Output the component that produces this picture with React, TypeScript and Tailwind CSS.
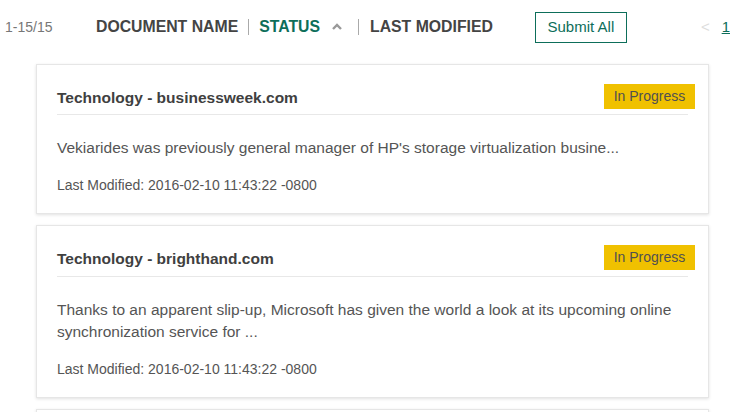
import React from 'react';

type Doc = {
  title: string;
  status: string;
  summary: string;
  modified: string;
};

const docs: Doc[] = [
  {
    title: 'Technology - businessweek.com',
    status: 'In Progress',
    summary: "Vekiarides was previously general manager of HP's storage virtualization busine...",
    modified: '2016-02-10 11:43:22 -0800',
  },
  {
    title: 'Technology - brighthand.com',
    status: 'In Progress',
    summary:
      'Thanks to an apparent slip-up, Microsoft has given the world a look at its upcoming online synchronization service for ...',
    modified: '2016-02-10 11:43:22 -0800',
  },
  {
    title: 'Technology - cnet.com',
    status: 'In Progress',
    summary: 'Loading...',
    modified: '2016-02-10 11:43:22 -0800',
  },
];

const DocCard: React.FC<{ doc: Doc }> = ({ doc }) => (
  <div className="border border-[#e6e6e6] bg-white px-5 pt-[18px] pb-[18px] shadow-[0_1px_3px_rgba(0,0,0,0.12)]">
    {/* Card header */}
    <div className="flex items-center justify-between border-b border-[#e8e8e8] pb-[5px]">
      <h3 className="pt-[3px] text-[15.5px] font-bold text-[#404040]">{doc.title}</h3>
      <span className="-mr-[7px] flex h-[25px] w-[91px] items-center justify-center bg-[#f0c100] text-[14px] text-[#505050]">
        {doc.status}
      </span>
    </div>
    <p className="mt-[22px] text-[15.5px] leading-[22px] text-[#555]">{doc.summary}</p>
    <p className="mt-4 text-[14px] leading-5 text-[#555]">Last Modified: {doc.modified}</p>
  </div>
);

export default function App() {
  return (
    <div className="min-h-screen overflow-hidden bg-white font-['Liberation_Sans',Arial,sans-serif]">
      {/* Toolbar */}
      <div className="flex h-[54px] items-center whitespace-nowrap">
        <span className="w-[96px] pl-[5px] text-[14px] text-[#777]">1-15/15</span>
        <div className="flex items-center text-[15.8px] font-bold">
          <span className="text-[#444]">DOCUMENT NAME</span>
          <span className="mx-[10px] h-4 w-px bg-[#aaa]" />
          <span className="text-[#0d6e5a]">STATUS</span>
          <svg className="ml-[11px] h-3 w-3 text-[#999]" viewBox="0 0 12 12" fill="none">
            <path d="M2 8 L6 4 L10 8" stroke="currentColor" strokeWidth="2.4" />
          </svg>
          <span className="mx-[15px] h-4 w-px bg-[#aaa]" />
          <span className="ml-[-4px] text-[#444]">LAST MODIFIED</span>
        </div>
        <button className="ml-[42px] flex h-[31px] w-[92px] items-center justify-center border border-[#0d6e5a] text-[15px] text-[#0d6e5a]">
          Submit All
        </button>
        <span className="ml-[74px] text-[15px] text-[#ddd]">&lt;</span>
        <span className="ml-[12px] text-[15px] text-[#0d6e5a] underline">1</span>
      </div>

      {/* Document list */}
      <div className="ml-[36px] flex w-[673px] flex-col gap-[11px] pt-[10px]">
        {docs.map((d) => (
          <DocCard key={d.title} doc={d} />
        ))}
      </div>
    </div>
  );
}
